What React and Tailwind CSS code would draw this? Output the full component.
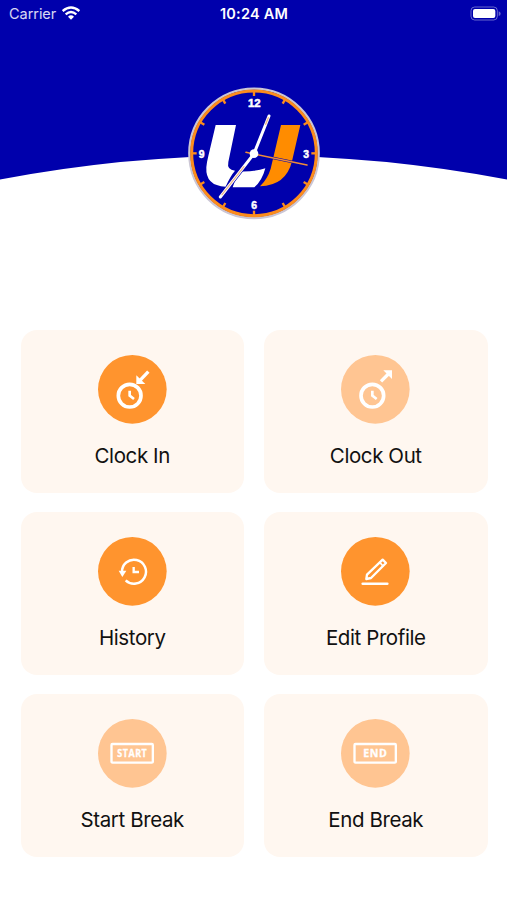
import React from 'react';

const ClockInIcon = () => (
  <g fill="none" stroke="#fff">
    <circle cx="95" cy="122" r="34" strokeWidth="11" />
    <path d="M95 107V122L108 132" strokeWidth="8" />
    <path d="M151 50L126 76" strokeWidth="10" />
    <path d="M115 61V87H142Z" fill="#fff" stroke="none" />
  </g>
);

const ClockOutIcon = () => (
  <g fill="none" stroke="#fff">
    <circle cx="94" cy="122" r="34" strokeWidth="11" />
    <path d="M94 107V122L107 132" strokeWidth="8" />
    <path d="M120 79L145 54" strokeWidth="10" />
    <path d="M127 46H153V72Z" fill="#fff" stroke="none" />
  </g>
);

const HistoryIcon = () => (
  <g fill="none" stroke="#fff" strokeWidth="7.5">
    <path d="M72 106A36 36 0 1 1 83 130" />
    <path d="M107 90V105H123" strokeWidth="7" />
    <path d="M62 101H85L73 120Z" fill="#fff" stroke="none" />
  </g>
);

const EditIcon = () => (
  <g fill="none" stroke="#fff" strokeWidth="7" strokeLinejoin="round" strokeLinecap="round">
    <path d="M125 68L135 78L90 123L76 126L78 113Z" />
    <path d="M117 77L126 87" strokeWidth="5" />
    <path d="M65 140H139" strokeWidth="7.5" />
  </g>
);

const SignIcon = ({ text, textLength }) => (
  <g>
    <rect x="40.5" y="75" width="124" height="56" rx="3" fill="none" stroke="#fff" strokeWidth="7" />
    <text
      x="103"
      y="115"
      textAnchor="middle"
      textLength={textLength}
      lengthAdjust="spacingAndGlyphs"
      fill="#fff"
      stroke="#fff"
      strokeWidth="1"
      className="font-['Open_Sans',sans-serif] text-[33px] font-bold tracking-[2px]"
    >
      {text}
    </text>
  </g>
);

const actions = [
  { label: 'Clock In', icon: <ClockInIcon />, active: true },
  { label: 'Clock Out', icon: <ClockOutIcon />, active: false },
  { label: 'History', icon: <HistoryIcon />, active: true },
  { label: 'Edit Profile', icon: <EditIcon />, active: true },
  { label: 'Start Break', icon: <SignIcon text="START" textLength="90" />, active: false },
  { label: 'End Break', icon: <SignIcon text="END" textLength="73" />, active: false },
];

function StatusBar() {
  return (
    <div className="grid h-7 grid-cols-3 items-center pl-[9px] pr-[6px] text-white">
      <div className="flex items-center gap-[6px]">
        <span className="text-[14.5px] tracking-[-0.05px] text-white/85">Carrier</span>
        <svg width="18" height="14" viewBox="0 0 54 42" className="-mt-0.5">
          <g fill="none" stroke="#fff" strokeWidth="7">
            <path d="M2 15Q27 -6 52 15" />
            <path d="M11 25Q27 11 43 25" />
          </g>
          <path d="M18 32Q27 24 36 32L27 41Z" fill="#fff" />
        </svg>
      </div>
      <span className="-ml-[2px] text-center text-[14.5px] font-semibold tracking-[0.2px]">10:24 AM</span>
      <svg width="31" height="15" viewBox="0 0 93 45" className="-mt-0.5 justify-self-end">
        <rect x="3" y="3" width="79" height="39" rx="11" fill="none" stroke="#fff" strokeOpacity="0.4" strokeWidth="3" />
        <rect x="9" y="9" width="67" height="27" rx="6" fill="#fff" />
        <path d="M86 16Q92 18 92 23T86 30Z" fill="#fff" fillOpacity="0.4" />
      </svg>
    </div>
  );
}

const ticks = [0, 30, 60, 90, 120, 150, 180, 210, 240, 270, 300, 330];

function ClockLogo() {
  return (
    <svg width="150" height="150" viewBox="0 0 450 450">
      <circle cx="222" cy="226" r="194" fill="#0000ac" stroke="#cbc6d5" strokeWidth="7" />
      <circle cx="222" cy="226" r="187" fill="none" stroke="#fc8c1c" strokeWidth="9" />
      {ticks.map((deg) => (
        <path
          key={deg}
          d="M222 41V54"
          stroke="#fc8c1c"
          strokeWidth="7"
          transform={`rotate(${deg} 222 226)`}
        />
      ))}

      {/* U mark */}
      <path
        d="M107 141H168L145 252Q140 276 165 278Q151 294 137 326Q76 324 79 268Q80 254 85 234Z"
        fill="#fff"
      />
      <path d="M175 280Q225 282 256 271Q246 309 223 328H158Z" fill="#fff" />
      <path d="M303 141H361L336 250Q318 323 240 325Q263 302 272 272Z" fill="#ff8c00" />

      {/* Numerals */}
      <g
        fill="#fff"
        stroke="#fff"
        strokeWidth="1.5"
        textAnchor="middle"
        className="font-['Liberation_Sans',sans-serif] text-[31px] font-bold"
      >
        <text x="223" y="87" textLength="38" lengthAdjust="spacingAndGlyphs">12</text>
        <text x="378" y="239">3</text>
        <text x="222" y="393">6</text>
        <text x="65" y="239">9</text>
      </g>

      {/* Hands */}
      <g strokeLinecap="round">
        <path d="M222 227L267 114" stroke="#0000ac" strokeWidth="13" />
        <path d="M222 227L121 357" stroke="#0000ac" strokeWidth="13" />
        <path d="M222 227L267 114" stroke="#fff" strokeWidth="9" />
        <path d="M222 227L121 357" stroke="#fff" strokeWidth="9" />
        <path d="M257 139L265 119" stroke="#eeb98a" strokeWidth="4" />
        <path d="M192 266L126 350" stroke="#eeb98a" strokeWidth="4" />
        <path d="M198 223L381 261" stroke="#0000ac" strokeWidth="8" />
        <path d="M198 223L381 261" stroke="#f08c38" strokeWidth="4.5" />
      </g>
      <circle cx="222" cy="227" r="13" fill="#fff" />
    </svg>
  );
}

function ActionCard({ label, icon, active }) {
  return (
    <button
      type="button"
      disabled={!active}
      className="flex h-[163px] flex-col items-center rounded-2xl bg-[#fff7f0] pt-[25px]"
    >
      <svg width="69" height="69" viewBox="0 0 207 207">
        <circle cx="103" cy="103" r="103" fill={active ? '#ff942e' : '#ffc592'} />
        {icon}
      </svg>
      <span className="mt-[18px] text-[20.5px] leading-7 tracking-[-0.4px] text-[#111]">{label}</span>
    </button>
  );
}

export default function App() {
  return (
    <div className="min-h-screen w-full overflow-hidden bg-white font-['Inter',sans-serif]">
      <header className="relative h-[330px]">
        <svg className="absolute left-0 top-0 w-full" height="180" viewBox="0 0 507 180" preserveAspectRatio="none">
          <path d="M0 0H507V179.500Q253.500 131.500 0 179.500Z" fill="#0000ac" />
        </svg>
        <div className="relative">
          <StatusBar />
          <div className="flex justify-center pl-[3px] pt-[50px]">
            <ClockLogo />
          </div>
        </div>
      </header>

      <main className="grid grid-cols-2 gap-x-5 gap-y-[19px] pl-[20.5px] pr-[19.5px]">
        {actions.map((action) => (
          <ActionCard key={action.label} {...action} />
        ))}
      </main>
    </div>
  );
}
